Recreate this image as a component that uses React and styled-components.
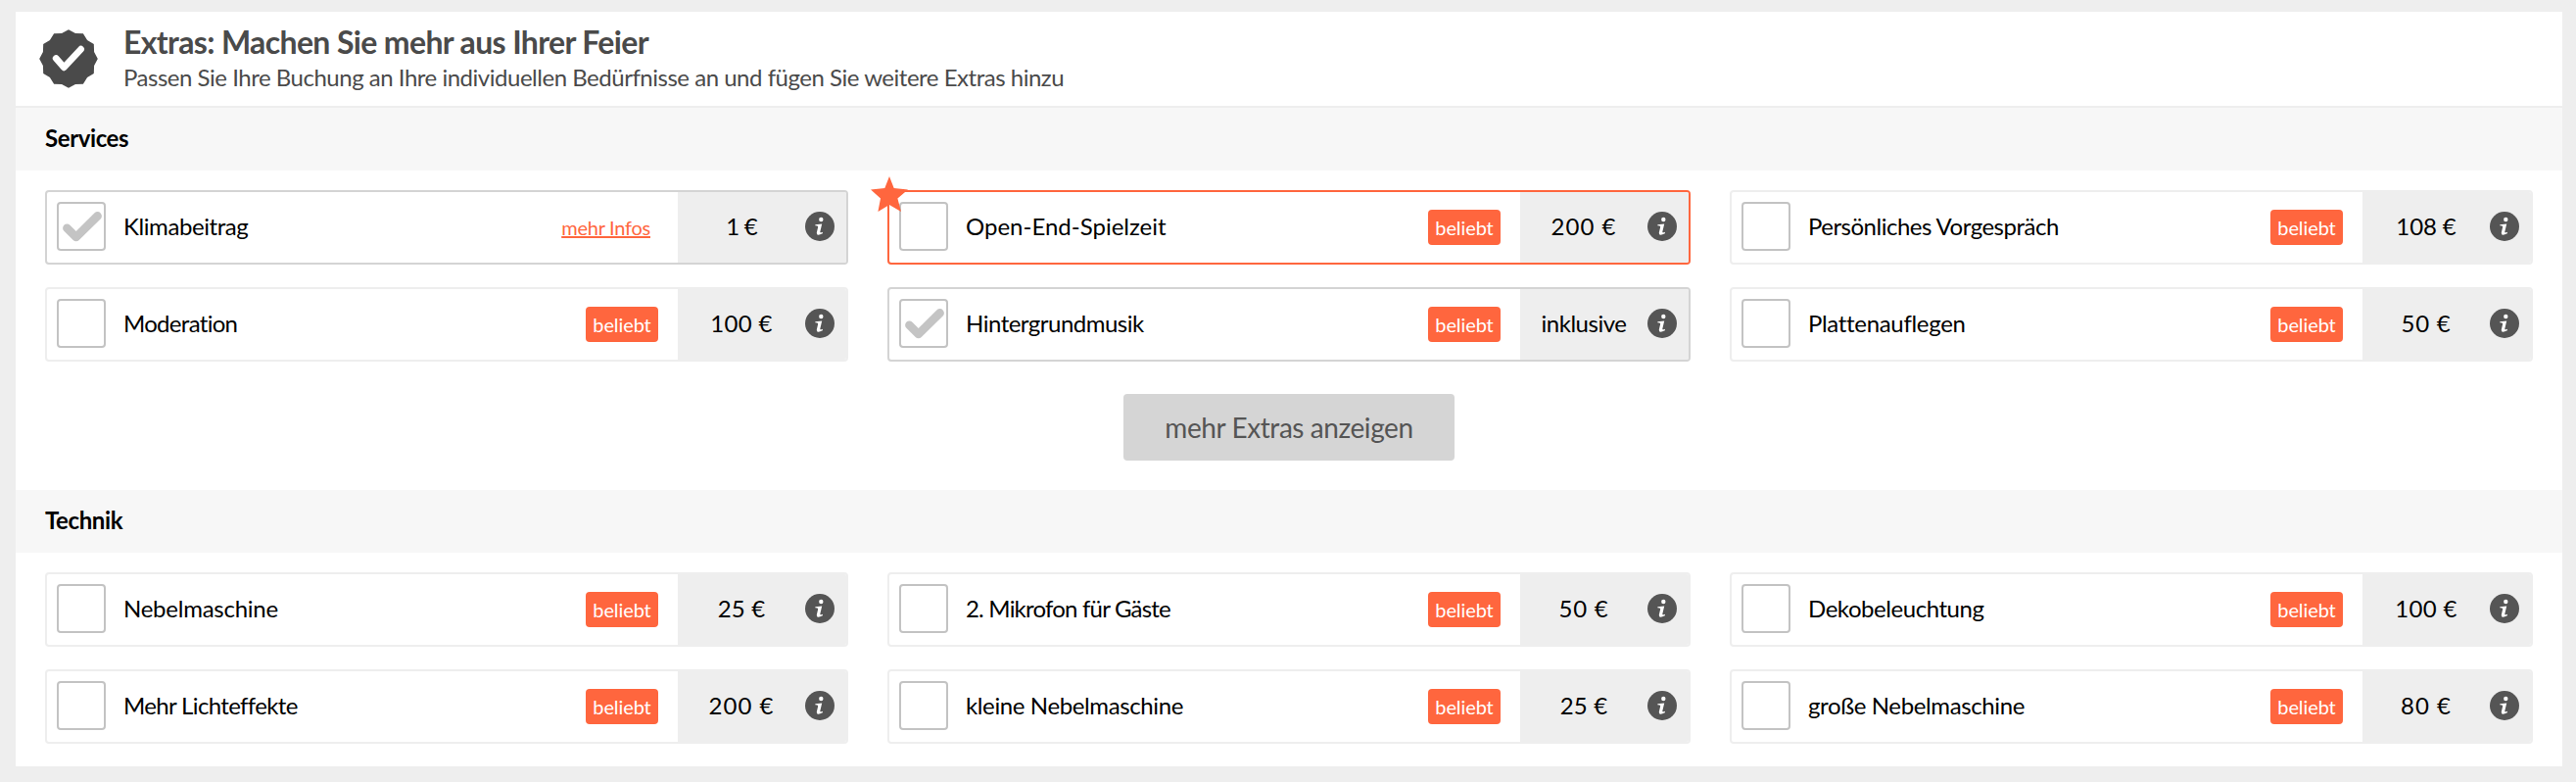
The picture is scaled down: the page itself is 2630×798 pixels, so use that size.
import React from "react"
import styled, { createGlobalStyle } from "styled-components"

const GlobalStyle = createGlobalStyle`
  body {
    margin: 0;
    background: #eeeeee;
    font-family: Lato, "Liberation Sans", sans-serif;
    color: #000;
  }
  * {
    box-sizing: border-box;
  }
`

const Panel = styled.main`
  margin: 12px 14px 16px 16px;
  background: #fff;
`

const Header = styled.header`
  display: flex;
  height: 98px;
  padding: 11px 24px 0;
  border-bottom: 2px solid #eeeeee;
  color: #4a4a4a;
`

const HeaderIcon = styled.svg`
  width: 60px;
  height: 60px;
  margin: 7px 26px 0 0;
`

const Title = styled.h2`
  margin: 0 0 2px;
  font-size: 32px;
  line-height: 39px;
  font-weight: 700;
  letter-spacing: -0.64px;
  white-space: nowrap;
`

const Subtitle = styled.p`
  margin: 0;
  font-size: 24px;
  line-height: 29px;
  letter-spacing: -0.48px;
  white-space: nowrap;
`

const SectionTitle = styled.h3`
  display: flex;
  align-items: center;
  height: 64px;
  margin: 0;
  padding: 0 30px 3px;
  background: #f7f7f7;
  font-size: 24px;
  font-weight: 700;
  letter-spacing: -0.4px;
`

const Grid = styled.div`
  display: grid;
  grid-template-columns: repeat(3, 1fr);
  gap: 23px 40px;
  padding: 20px 30px 0;
`

const borderColors = {
  plain: "#eeeeee",
  selected: "#d4d4d4",
  featured: "#ff663e",
}

const Card = styled.div`
  position: relative;
  display: flex;
  align-items: center;
  height: 76px;
  border: 2px solid ${({ $kind }) => borderColors[$kind]};
  border-radius: 4px;
`

const Star = styled.svg`
  position: absolute;
  left: -19px;
  top: -16px;
  width: 38px;
  height: 36px;
  fill: #ff663e;
`

const Checkbox = styled.div`
  align-self: flex-start;
  width: 50px;
  height: 50px;
  margin: 10px 18px 0 10px;
  border: 2px solid #c3c3c3;
  border-radius: 4px;
`

const Mark = styled.svg`
  display: block;
  width: 46px;
  height: 46px;
  fill: none;
  stroke: #c4c4c4;
  stroke-width: 8.6;
  stroke-linecap: round;
  stroke-linejoin: round;
`

const Name = styled.div`
  flex: 1;
  padding-bottom: 3px;
  font-size: 24px;
  line-height: 29px;
  letter-spacing: ${({ $tracking }) => $tracking}px;
  white-space: nowrap;
`

const Badge = styled.span`
  width: 74px;
  height: 36px;
  margin-right: 20px;
  border-radius: 4px;
  background: #ff663e;
  color: #fff;
  font-size: 20px;
  line-height: 36px;
  letter-spacing: -0.1px;
  text-align: center;
`

const MoreLink = styled.a`
  margin-right: 28px;
  color: #ff663e;
  font-size: 20px;
  line-height: 24px;
  text-decoration: underline;
  text-decoration-thickness: 2px;
  text-underline-offset: 1px;
  letter-spacing: -0.25px;
`

const PriceBox = styled.div`
  display: flex;
  align-items: center;
  width: 172px;
  height: 100%;
  border-radius: 0 2px 2px 0;
  background: #eeeeee;
`

const Price = styled.div`
  width: 130px;
  padding-bottom: 3px;
  font-size: 24px;
  line-height: 29px;
  letter-spacing: ${({ $tracking }) => $tracking}px;
  text-align: center;
`

const InfoIcon = styled.svg`
  width: 30px;
  height: 30px;
  margin-bottom: 2px;
`

const ButtonRow = styled.div`
  display: flex;
  justify-content: center;
  padding: 33px 0 30px;
`

const MoreButton = styled.button`
  width: 338px;
  height: 68px;
  padding: 0;
  border: 0;
  border-radius: 4px;
  background: #d5d5d5;
  color: #555;
  font-family: inherit;
  font-size: 28px;
  letter-spacing: -0.42px;
`

const Footer = styled.div`
  height: 23px;
`

// tracking / priceTracking: letter spacing in px
const services = [
  { name: "Klimabeitrag", tracking: -0.42, price: "1 €", priceTracking: -0.8, kind: "selected", checked: true, link: true },
  { name: "Open-End-Spielzeit", tracking: 0, price: "200 €", priceTracking: 1, kind: "featured" },
  { name: "Persönliches Vorgespräch", tracking: -0.5, price: "108 €", priceTracking: -0.1 },
  { name: "Moderation", tracking: -0.7, price: "100 €", priceTracking: 0.3 },
  { name: "Hintergrundmusik", tracking: -0.5, price: "inklusive", priceTracking: -0.5, kind: "selected", checked: true },
  { name: "Plattenauflegen", tracking: -0.32, price: "50 €", priceTracking: 0.8 },
]

const equipment = [
  { name: "Nebelmaschine", tracking: -0.25, price: "25 €", priceTracking: 0.1 },
  { name: "2. Mikrofon für Gäste", tracking: -0.8, price: "50 €", priceTracking: 0.8 },
  { name: "Dekobeleuchtung", tracking: -0.45, price: "100 €", priceTracking: 0.3 },
  { name: "Mehr Lichteffekte", tracking: -0.65, price: "200 €", priceTracking: 1 },
  { name: "kleine Nebelmaschine", tracking: -0.38, price: "25 €", priceTracking: 0.1 },
  { name: "große Nebelmaschine", tracking: -0.38, price: "80 €", priceTracking: 1 },
]

// seal with twelve shallow teeth
const sealPoints = Array.from({ length: 24 }, (_, i) => {
  const r = i % 2 ? 27 : 29.8
  const a = (i * Math.PI) / 12
  return `${(30 + r * Math.sin(a)).toFixed(2)},${(30 - r * Math.cos(a)).toFixed(2)}`
}).join(" ")

const Extra = ({ name, tracking, price, priceTracking, kind = "plain", checked, link }) => (
  <Card $kind={kind}>
    <Checkbox>
      {checked && (
        <Mark viewBox="0 0 46 46">
          <path d="M8.4 24.8L17.7 34L39.6 12.4" />
        </Mark>
      )}
    </Checkbox>
    <Name $tracking={tracking}>{name}</Name>
    {link ? <MoreLink>mehr Infos</MoreLink> : <Badge>beliebt</Badge>}
    <PriceBox>
      <Price $tracking={priceTracking}>{price}</Price>
      <InfoIcon viewBox="0 0 30 30">
        <circle cx="15" cy="15" r="15" fill="#555" />
        <circle cx="16.3" cy="8" r="2.2" fill="#fff" />
        <path
          d="M10.4 13.2L17.2 12.4L15.3 20.4Q15 22 18 20.8L17.8 22.3Q11.4 25.4 11.8 21.4L13.2 15.4Q13.3 14.4 10.3 14.3Z"
          fill="#fff"
        />
      </InfoIcon>
    </PriceBox>
    {kind === "featured" && (
      <Star viewBox="0 0 38 36">
        <path d="M19 0L23.7 12L38 13.6L27.4 22.6L31 36L19 29L7.4 36L10 22.6L0 13.6L14.3 12Z" />
      </Star>
    )}
  </Card>
)

const App = () => (
  <>
    <GlobalStyle />
    <Panel>
      <Header>
        <HeaderIcon viewBox="0 0 60 60">
          <polygon points={sealPoints} fill="#4a4a4a" />
          <path
            d="M17.2 29.6L25.3 38.8L42.6 20.2"
            fill="none"
            stroke="#fff"
            strokeWidth="6.8"
            strokeLinecap="round"
            strokeLinejoin="round"
          />
        </HeaderIcon>
        <div>
          <Title>Extras: Machen Sie mehr aus Ihrer Feier</Title>
          <Subtitle>
            Passen Sie Ihre Buchung an Ihre individuellen Bedürfnisse an und fügen Sie weitere Extras hinzu
          </Subtitle>
        </div>
      </Header>
      <SectionTitle>Services</SectionTitle>
      <Grid>
        {services.map(item => (
          <Extra key={item.name} {...item} />
        ))}
      </Grid>
      <ButtonRow>
        <MoreButton>mehr Extras anzeigen</MoreButton>
      </ButtonRow>
      <SectionTitle>Technik</SectionTitle>
      <Grid>
        {equipment.map(item => (
          <Extra key={item.name} {...item} />
        ))}
      </Grid>
      <Footer />
    </Panel>
  </>
)

export default App
